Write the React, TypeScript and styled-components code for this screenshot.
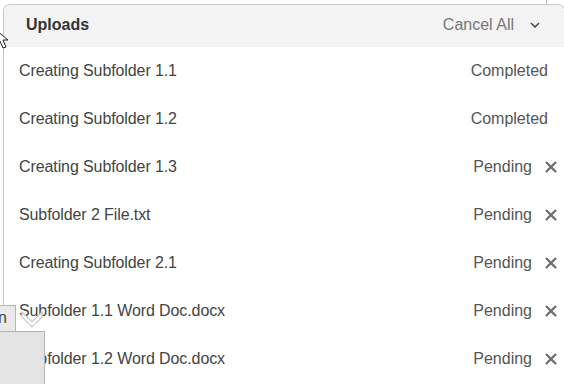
import React from "react";
import styled, { createGlobalStyle } from "styled-components";

const Global = createGlobalStyle`
  html, body { margin: 0; padding: 0; background: #fff; overflow: hidden; }
  body { font-family: "Liberation Sans", Arial, sans-serif; }
`;

const Page = styled.div`
  position: relative;
  width: 564px;
  height: 384px;
  overflow: hidden;
  padding: 4px 0 0 3px;
  box-sizing: border-box;
`;

const BackLine = styled.div`
  position: absolute;
  left: 546px;
  top: 0;
  width: 1px;
  height: 5px;
  background: #bbb;
`;

const Panel = styled.div`
  width: 560px;
  border: 1px solid #c8c8c8;
  border-bottom: none;
  border-radius: 7px 7px 0 0;
  overflow: hidden;
  background: #fff;
`;

const Header = styled.div`
  height: 42px;
  box-sizing: border-box;
  padding: 0 24px 3px 22px;
  background: #f3f3f4;
  display: flex;
  align-items: center;
`;

const Title = styled.div`
  font-size: 16px;
  font-weight: bold;
  color: #333;
  flex: 1;
`;

const CancelAll = styled.div`
  font-size: 16px;
  color: #777;
  margin-right: 16px;
`;

const List = styled.div`
  display: flex;
  flex-direction: column;
`;

const Row = styled.div`
  height: 48px;
  display: flex;
  align-items: center;
  padding: 0 3px 0 15px;
`;

const Name = styled.div`
  flex: 1;
  font-size: 16px;
  color: #444;
  letter-spacing: -0.1px;
`;

const Status = styled.div<{ $withX: boolean }>`
  font-size: 16px;
  color: #555;
  margin-right: ${(p) => (p.$withX ? "11px" : "13px")};
`;

const XBox = styled.div`
  width: 16px;
  height: 16px;
  display: flex;
  align-items: center;
  justify-content: center;
  margin-right: 2px;
`;

const Tab = styled.div`
  position: absolute;
  left: -1px;
  top: 305px;
  width: 17px;
  height: 27px;
  background: #e9e9e9;
  border: 1px solid #b5b5b5;
  box-sizing: border-box;
  font-size: 16px;
  color: #444;
  line-height: 23px;
  overflow: hidden;
  text-indent: -2px;
`;

const Box = styled.div`
  position: absolute;
  left: -1px;
  top: 331px;
  width: 46px;
  height: 60px;
  background: #e4e4e4;
  border: 1px solid #b5b5b5;
  box-sizing: border-box;
`;

const Chev = styled.svg`
  position: absolute;
  left: 21px;
  top: 311px;
`;

const Cursor = styled.svg`
  position: absolute;
  left: -4px;
  top: 30px;
`;

const rows: { name: string; status: string }[] = [
  { name: "Creating Subfolder 1.1", status: "Completed" },
  { name: "Creating Subfolder 1.2", status: "Completed" },
  { name: "Creating Subfolder 1.3", status: "Pending" },
  { name: "Subfolder 2 File.txt", status: "Pending" },
  { name: "Creating Subfolder 2.1", status: "Pending" },
  { name: "Subfolder 1.1 Word Doc.docx", status: "Pending" },
  { name: "Subfolder 1.2 Word Doc.docx", status: "Pending" },
];

const XIcon = () => (
  <svg width="14" height="14" viewBox="0 0 14 14">
    <path d="M2 2 L12 12 M12 2 L2 12" stroke="#707070" strokeWidth="2.4" strokeLinecap="butt" />
  </svg>
);

export default function App() {
  return (
    <>
      <Global />
      <Page>
        <BackLine />
        <Panel>
          <Header>
            <Title>Uploads</Title>
            <CancelAll>Cancel All</CancelAll>
            <svg width="10" height="6" viewBox="0 0 10 6">
              <path d="M1 1 L5 5 L9 1" stroke="#444" strokeWidth="1.5" fill="none" />
            </svg>
          </Header>
          <List>
            {rows.map((r, i) => {
              const pending = r.status === "Pending";
              return (
                <Row key={i}>
                  <Name>{r.name}</Name>
                  <Status $withX={pending}>{r.status}</Status>
                  {pending ? (
                    <XBox>
                      <XIcon />
                    </XBox>
                  ) : null}
                </Row>
              );
            })}
          </List>
        </Panel>
        <Tab>n</Tab>
        <Box />
        <Chev width="22" height="18" viewBox="0 0 22 18">
          <path d="M1 1 L11 11 L21 1 L21 6 L11 16 L1 6 Z" fill="#fff" stroke="#c8c8c8" strokeWidth="1.2" />
        </Chev>
        <Cursor width="20" height="22" viewBox="0 0 20 22">
          <path d="M0 0 L0 14 L4 11 L7 18 L10 17 L7 10 L12 10 Z" fill="#fff" stroke="#222" strokeWidth="1" />
        </Cursor>
      </Page>
    </>
  );
}
